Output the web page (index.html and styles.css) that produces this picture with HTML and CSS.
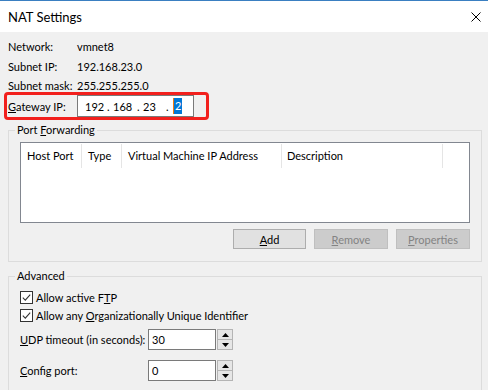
FILE: index.html
```html
<!DOCTYPE html>
<html lang="en">

<head>
  <meta charset="UTF-8" />
  <meta name="viewport" content="width=device-width, initial-scale=1.0" />
  <title>NAT Settings</title>
  <link rel="stylesheet" href="styles.css">
</head>

<body>
  <div class="window">
    <header class="titlebar">
      <span class="title">NAT Settings</span>
      <svg class="close" width="10" height="10" viewBox="0 0 10 10">
        <path d="M0.5 0.5L9.5 9.5M9.5 0.5L0.5 9.5" stroke="#000" stroke-width="1" fill="none" />
      </svg>
    </header>

    <main class="dialog">
      <div class="info">
        <span>Network:</span><span>vmnet8</span>
        <span>Subnet IP:</span><span>192.168.23.0</span>
        <span>Subnet mask:</span><span>255.255.255.0</span>
      </div>

      <div class="gateway">
        <label class="gw-label"><u>G</u>ateway IP:</label>
        <div class="ip">
          <span class="oct o1">192</span><span class="dot d1">.</span>
          <span class="oct o2">168</span><span class="dot d2">.</span>
          <span class="oct o3">23</span><span class="dot d3">.</span>
          <span class="oct sel">2</span>
        </div>
      </div>

      <fieldset class="group">
        <legend>Port <u>F</u>orwarding</legend>
        <div class="list">
          <div class="list-head">
            <span class="col c1">Host Port</span>
            <span class="col c2">Type</span>
            <span class="col c3">Virtual Machine IP Address</span>
            <span class="col c4">Description</span>
          </div>
        </div>
        <div class="buttons">
          <button class="btn add"><u>A</u>dd</button>
          <button class="btn" disabled><u>R</u>emove</button>
          <button class="btn" disabled><u>P</u>roperties</button>
        </div>
      </fieldset>

      <fieldset class="group advanced">
        <legend>Advanced</legend>
        <div class="check">
          <svg width="13" height="13" viewBox="0 0 13 13">
            <rect x="0.5" y="0.5" width="12" height="12" fill="#fff" stroke="#333" />
            <path d="M2.8 6.6L5.3 9.1L10.2 3.6" fill="none" stroke="#333" stroke-width="1.1" />
          </svg>
          <span>Allow active F<u>T</u>P</span>
        </div>
        <div class="check">
          <svg width="13" height="13" viewBox="0 0 13 13">
            <rect x="0.5" y="0.5" width="12" height="12" fill="#fff" stroke="#333" />
            <path d="M2.8 6.6L5.3 9.1L10.2 3.6" fill="none" stroke="#333" stroke-width="1.1" />
          </svg>
          <span>Allow any <u>O</u>rganizationally Unique Identifier</span>
        </div>

        <div class="field udp">
          <label class="field-label"><u>U</u>DP timeout (in seconds):</label>
          <div class="num">30</div>
          <div class="spin">
            <span class="arrow"><svg width="7" height="4" viewBox="0 0 7 4"><path d="M0 4L3.5 0L7 4Z" fill="#000" /></svg></span>
            <span class="arrow"><svg width="7" height="4" viewBox="0 0 7 4"><path d="M0 0L3.5 4L7 0Z" fill="#000" /></svg></span>
          </div>
        </div>
        <div class="field config">
          <label class="field-label"><u>C</u>onfig port:</label>
          <div class="num">0</div>
          <div class="spin">
            <span class="arrow"><svg width="7" height="4" viewBox="0 0 7 4"><path d="M0 4L3.5 0L7 4Z" fill="#000" /></svg></span>
            <span class="arrow"><svg width="7" height="4" viewBox="0 0 7 4"><path d="M0 0L3.5 4L7 0Z" fill="#000" /></svg></span>
          </div>
        </div>
      </fieldset>
    </main>
  </div>
</body>

</html>
```

FILE: styles.css
```css
* {
  box-sizing: border-box;
}

html,
body {
  margin: 0;
  width: 488px;
  height: 390px;
  overflow: hidden;
  background: #f0f0f0;
  font-family: Lato, "Liberation Sans", sans-serif;
  font-size: 11px;
  color: #000;
}

u {
  text-underline-offset: 1px;
}

.titlebar {
  height: 32px;
  background: #fff;
  border-top: 1px solid #3a7fc1;
  display: flex;
  align-items: center;
  justify-content: space-between;
  padding: 0 7px 0 8px;
}

.title {
  font-size: 13px;
  margin-top: 1px;
}

.close {
  margin-top: 1px;
}

.dialog {
  padding: 0 6px 0 8px;
}

.info {
  display: grid;
  grid-template-columns: 69px auto;
  grid-auto-rows: 19.5px;
  line-height: 19.5px;
  padding-top: 5.25px;
  margin-bottom: -3.75px;
}

.gateway {
  width: 205px;
  height: 28px;
  margin-left: -4px;
  padding-left: 1px;
  border: 3px solid #f2201d;
  border-radius: 4px;
  display: flex;
  align-items: center;
}

.gw-label {
  width: 69px;
}

.ip {
  width: 117px;
  height: 22px;
  background: #fff;
  border: 1px solid #7a7a7a;
  display: flex;
  align-items: center;
  padding-left: 7px;
}

.oct,
.dot {
  display: inline-block;
}

.o1 { width: 22px; }
.d1 { width: 6px; }
.o2 { width: 24px; }
.d2 { width: 6px; }
.o3 { width: 23px; }
.d3 { width: 7px; }

.sel {
  background: #0078d7;
  color: #fff;
  line-height: 16px;
  padding: 0 1px;
  border-left: 1px solid #f07a10;
}

.group {
  margin: 2px 0 0 0;
  padding: 4px 11px 12px 11px;
  border: 1px solid #dcdcdc;
  min-width: 0;
}

.group legend {
  padding: 0 2px;
  margin-left: -5px;
  line-height: 16px;
}

.list {
  height: 81px;
  background: #fff;
  border: 1px solid #828790;
}

.list-head {
  display: flex;
  height: 25px;
}

.col {
  height: 24px;
  margin-top: 1px;
  line-height: 23px;
  padding-left: 6px;
  border-right: 1px solid #e5e5e5;
  white-space: nowrap;
  overflow: hidden;
}

.c1 { width: 61px; }
.c2 { width: 40px; }
.c3 { width: 160px; }
.c4 { width: 161px; padding-left: 5px; }

.buttons {
  display: flex;
  justify-content: flex-end;
  gap: 8px;
  margin-top: 6px;
}

.btn {
  width: 74px;
  height: 20px;
  padding: 0;
  font: inherit;
  color: #000;
  background: #e1e1e1;
  border: 1px solid #adadad;
}

.btn.add {
  width: 73px;
}

.btn:disabled {
  background: #cccccc;
  border-color: #bfbfbf;
  color: #838383;
}

.advanced {
  margin-top: 6px;
  padding-top: 5px;
}

.check {
  display: flex;
  align-items: center;
  gap: 3px;
  height: 17.5px;
}

.field {
  display: flex;
  align-items: center;
  height: 21px;
}

.udp {
  margin-top: 5px;
}

.config {
  margin-top: 10px;
}

.field-label {
  width: 128px;
}

.num {
  width: 68px;
  height: 21px;
  background: #fff;
  border: 1px solid #7a7a7a;
  padding-left: 3px;
  line-height: 19px;
}

.spin {
  width: 17px;
  height: 21px;
  display: flex;
  flex-direction: column;
}

.arrow {
  flex: 1;
  display: flex;
  align-items: center;
  justify-content: center;
  background: #e6e6e6;
  border: 1px solid #b4b4b4;
  margin-left: 1px;
}

.arrow + .arrow {
  border-top: none;
}
```
